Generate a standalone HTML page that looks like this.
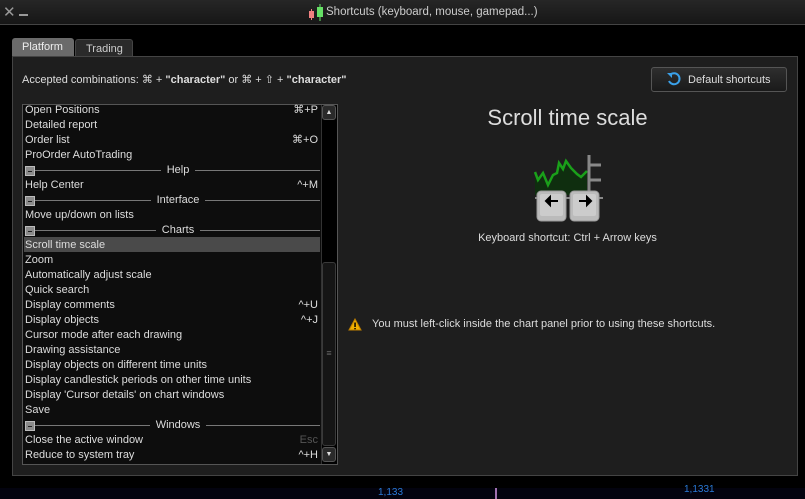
<!DOCTYPE html><html><head><style>
*{margin:0;padding:0;box-sizing:border-box}
body{width:805px;height:499px;background:#000;font-family:"Liberation Sans",sans-serif;position:relative;overflow:hidden;color:#ddd}
.abs{position:absolute}
.row{position:absolute;left:25px;width:294px;height:15px;font-size:11px;line-height:15px;color:#ddd;white-space:nowrap;margin-top:1px}
.row .k{position:absolute;right:1px;top:0}
.sec{position:absolute;left:24px;width:296px;height:15px;font-size:11px;line-height:15px;color:#ddd;margin-top:1px}
.sec .m{position:absolute;left:1px;top:3px;width:10px;height:10px;background:#8a8a8a;border:1px solid #bbb}
.sec .m:after{content:"";position:absolute;left:2px;top:3.5px;width:4px;height:1px;background:#222}
.sec .l{position:absolute;left:11px;right:0;top:7px;height:1px;background:#777}
.sec .t{position:absolute;left:12px;right:0;text-align:center;top:0}
.sec .t span{background:#0d0d0d;padding:0 6px}
</style></head><body>
<div class="abs" style="left:0;top:0;width:805px;height:25px;background:linear-gradient(#262626,#161616);border-bottom:1px solid #444"></div>
<div class="abs" style="left:3px;top:3px;font-size:15px;color:#999">✕</div>
<div class="abs" style="left:19px;top:14px;width:9px;height:2px;background:#999"></div>
<svg class="abs" style="left:308px;top:4px" width="16" height="18"><rect x="1" y="7" width="5" height="7" fill="#f08080"/><line x1="3.5" y1="5" x2="3.5" y2="16" stroke="#f08080"/><rect x="9" y="3" width="6" height="10" fill="#66e066"/><line x1="12" y1="0" x2="12" y2="17" stroke="#66e066"/></svg>
<div class="abs" style="left:326px;top:6px;font-size:11.5px;color:#ccc">Shortcuts (keyboard, mouse, gamepad...)</div>
<div class="abs" style="left:12px;top:38px;width:62px;height:19px;background:#6a6a6a;border-radius:3px 3px 0 0;font-size:11px;color:#eee;padding:3px 0 0 10px">Platform</div>
<div class="abs" style="left:75px;top:39px;width:58px;height:18px;background:#2a2a2a;border:1px solid #444;border-bottom:none;border-radius:3px 3px 0 0;font-size:11px;color:#ccc;padding:3px 0 0 10px">Trading</div>
<div class="abs" style="left:12px;top:56px;width:786px;height:420px;background:#1e1e1e;border:1px solid #444"></div>
<div class="abs" style="left:22px;top:73px;font-size:11px;color:#ddd">Accepted combinations: ⌘ + <b>"character"</b> or ⌘ + ⇧ + <b>"character"</b></div>
<div class="abs" style="left:651px;top:67px;width:136px;height:25px;background:linear-gradient(#2e2e2e,#1a1a1a);border:1px solid #555;border-radius:3px;font-size:11px;color:#ddd;padding:6px 0 0 36px">Default shortcuts</div>
<svg class="abs" style="left:666px;top:71px" width="16" height="16"><path d="M4 4 A5.5 5.5 0 1 1 3 10" fill="none" stroke="#3aa0e8" stroke-width="2"/><path d="M1 2 L6 2 L6 7 Z" fill="#3aa0e8"/></svg>
<div class="abs" style="left:22px;top:104px;width:316px;height:361px;background:#0d0d0d;border:1px solid #555;overflow:hidden">
</div>
<div class="row" style="top:102px">Open Positions<span class="k">⌘+P</span></div>
<div class="row" style="top:117px">Detailed report</div>
<div class="row" style="top:132px">Order list<span class="k">⌘+O</span></div>
<div class="row" style="top:147px">ProOrder AutoTrading</div>
<div class="sec" style="top:162px"><div class="l"></div><div class="t"><span>Help</span></div><div class="m"></div></div>
<div class="row" style="top:177px">Help Center<span class="k">^+M</span></div>
<div class="sec" style="top:192px"><div class="l"></div><div class="t"><span>Interface</span></div><div class="m"></div></div>
<div class="row" style="top:207px">Move up/down on lists</div>
<div class="sec" style="top:222px"><div class="l"></div><div class="t"><span>Charts</span></div><div class="m"></div></div>
<div class="abs" style="left:24px;top:237px;width:296px;height:15px;background:#4a4a4a"></div>
<div class="row" style="top:237px">Scroll time scale</div>
<div class="row" style="top:252px">Zoom</div>
<div class="row" style="top:267px">Automatically adjust scale</div>
<div class="row" style="top:282px">Quick search</div>
<div class="row" style="top:297px">Display comments<span class="k">^+U</span></div>
<div class="row" style="top:312px">Display objects<span class="k">^+J</span></div>
<div class="row" style="top:327px">Cursor mode after each drawing</div>
<div class="row" style="top:342px">Drawing assistance</div>
<div class="row" style="top:357px">Display objects on different time units</div>
<div class="row" style="top:372px">Display candlestick periods on other time units</div>
<div class="row" style="top:387px">Display 'Cursor details' on chart windows</div>
<div class="row" style="top:402px">Save</div>
<div class="sec" style="top:417px"><div class="l"></div><div class="t"><span>Windows</span></div><div class="m"></div></div>
<div class="row" style="top:432px">Close the active window<span class="k" style="color:#555">Esc</span></div>
<div class="row" style="top:447px">Reduce to system tray<span class="k">^+H</span></div>
<div class="abs" style="left:321px;top:105px;width:16px;height:359px;background:#000;border-left:1px solid #333"></div>
<div class="abs" style="left:322px;top:105px;width:14px;height:15px;background:#2a2a2a;border:1px solid #555;border-radius:3px;font-size:7px;color:#ddd;text-align:center;line-height:13px">▲</div>
<div class="abs" style="left:322px;top:262px;width:14px;height:184px;background:#151515;border:1px solid #3a3a3a;border-radius:3px;font-size:9px;color:#666;text-align:center;line-height:180px">≡</div>
<div class="abs" style="left:322px;top:447px;width:14px;height:15px;background:#2a2a2a;border:1px solid #555;border-radius:3px;font-size:7px;color:#ddd;text-align:center;line-height:13px">▼</div>
<div class="abs" style="left:440px;top:105px;width:255px;text-align:center;font-size:22px;color:#ddd">Scroll time scale</div>
<svg class="abs" style="left:533px;top:155px" width="72" height="70">
<path d="M2 17 L5 25 L10 18 L15 30 L20 20 L24 18 L26 8 L30 14 L33 6 L38 13 L44 19 L48 22 L52 18 L54 16 L54 40 L2 40 Z" fill="#0f2e0f"/>
<path d="M2 17 L5 25 L10 18 L15 30 L20 20 L24 18 L26 8 L30 14 L33 6 L38 13 L44 19 L48 22 L52 18 L54 16" fill="none" stroke="#1aa01a" stroke-width="2.5"/>
<path d="M56 0 V45 M56 10 H68 M56 25 H68" stroke="#888" stroke-width="3" fill="none"/>
<path d="M2 43 H70" stroke="#888" stroke-width="2"/>
<rect x="4" y="36" width="29" height="30" rx="4" fill="#bbb" stroke="#999"/><rect x="7" y="39" width="23" height="22" rx="2" fill="#ccc"/>
<rect x="37" y="36" width="29" height="30" rx="4" fill="#bbb" stroke="#999"/><rect x="40" y="39" width="23" height="22" rx="2" fill="#ccc"/>
<path d="M13 46 H25 M13 46 L17 42 V50 Z" stroke="#000" stroke-width="2" fill="#000"/>
<path d="M46 46 H58 M58 46 L54 42 V50 Z" stroke="#000" stroke-width="2" fill="#000"/>
</svg>
<div class="abs" style="left:440px;top:232px;width:255px;text-align:center;font-size:11px;color:#ddd">Keyboard shortcut: Ctrl + Arrow keys</div>
<svg class="abs" style="left:348px;top:318px" width="14" height="13"><path d="M7 1 L13 12 L1 12 Z" fill="#f0b000" stroke="#c08000"/><rect x="6.3" y="4.5" width="1.5" height="4.5" fill="#000"/><rect x="6.3" y="10" width="1.5" height="1.3" fill="#000"/></svg>
<div class="abs" style="left:372px;top:318px;font-size:11px;color:#ddd">You must left-click inside the chart panel prior to using these shortcuts.</div>
<div class="abs" style="left:0;top:488px;width:805px;height:11px;background:#03030f"></div>
<div class="abs" style="left:378px;top:487px;font-size:10px;color:#2a7ad8">1,133</div>
<div class="abs" style="left:495px;top:488px;width:2px;height:11px;background:#a070b0"></div>
<div class="abs" style="left:684px;top:484px;font-size:10px;color:#2a7ad8">1,1331</div>
</body></html>
